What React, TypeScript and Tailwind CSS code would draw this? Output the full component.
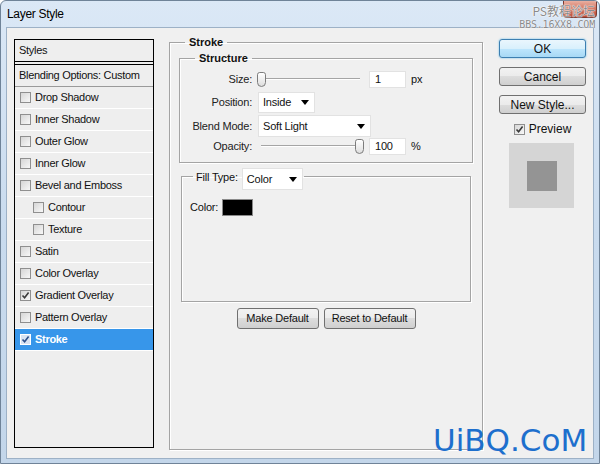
import React from "react";

type StyleItem = {
  label: string;
  on?: boolean;
  indent?: boolean;
  selected?: boolean;
};

const STYLE_ITEMS: StyleItem[] = [
  { label: "Drop Shadow" },
  { label: "Inner Shadow" },
  { label: "Outer Glow" },
  { label: "Inner Glow" },
  { label: "Bevel and Emboss" },
  { label: "Contour", indent: true },
  { label: "Texture", indent: true },
  { label: "Satin" },
  { label: "Color Overlay" },
  { label: "Gradient Overlay", on: true },
  { label: "Pattern Overlay" },
  { label: "Stroke", on: true, selected: true },
];

function CheckBox({ on, inverted }: { on?: boolean; inverted?: boolean }) {
  return (
    <span
      className={`flex h-[11px] w-[11px] shrink-0 items-center justify-center border ${
        inverted
          ? "border-white bg-[#d7e3f3]"
          : "border-[#8f8f8f] bg-linear-to-br from-[#d6d6d6] to-[#f8f8f8]"
      }`}
    >
      {on && (
        <svg width="9" height="9" viewBox="0 0 9 9">
          <path d="M1.5 4.5 L3.6 6.8 L7.6 1.6" fill="none" stroke={inverted ? "#2c4f8a" : "#3a3a3a"} strokeWidth="1.6" />
        </svg>
      )}
    </span>
  );
}

function Arrow() {
  return (
    <svg width="8" height="5" viewBox="0 0 8 5" className="shrink-0">
      <path d="M0 0 H8 L4 5 Z" fill="#000" />
    </svg>
  );
}

function Select({ value, width }: { value: string; width: string }) {
  return (
    <div className={`flex h-full items-center justify-between border border-[#e2e2e2] bg-white pl-[4px] pr-[5px] ${width}`}>
      <span className="text-[11px] tracking-[-0.2px]">{value}</span>
      <Arrow />
    </div>
  );
}

function Slider({ atEnd }: { atEnd?: boolean }) {
  return (
    <div className="relative h-[17px] w-[107px]">
      <div className="absolute left-[4px] right-[4px] top-[7px] h-[2px] border-t border-[#a5a5a5] bg-white" />
      <div
        className={`absolute top-[1px] h-[15px] w-[9px] rounded-[3px] rounded-b-[5px] border border-[#7c7c7c] bg-linear-to-b from-white to-[#dedede] ${
          atEnd ? "right-0" : "left-0"
        }`}
      />
    </div>
  );
}

function NumberBox({ value }: { value: string }) {
  return (
    <div className="flex h-[17px] w-[37px] items-center border border-[#e2e2e2] bg-white pl-[5px] text-[11px]">
      {value}
    </div>
  );
}

function Button({ children, primary, width }: { children: React.ReactNode; primary?: boolean; width: string }) {
  return (
    <div
      className={`flex items-center justify-center rounded-[3px] border ${width} ${
        primary
          ? "border-[#3c7fb1] bg-[linear-gradient(#eaf6fd,#d9f0fc_50%,#bee6fd_50%,#a7d9f5)] shadow-[0_0_2px_#5cb8e8]"
          : "border-[#707070] bg-[linear-gradient(#f2f2f2,#ebebeb_50%,#dddddd_50%,#cfcfcf)]"
      }`}
    >
      {children}
    </div>
  );
}

export default function App() {
  return (
    <div className="relative flex h-[464px] w-[600px] flex-col overflow-hidden rounded-t-[6px] border border-[#6f8398] bg-linear-to-b from-[#dbe8f6] via-[#c9dbee] to-[#c3d6ea] font-['Liberation_Sans',Arial,sans-serif] text-[#111]">
      {/* title bar */}
      <div className="flex h-[26px] shrink-0 justify-between">
        <span className="pl-[6px] pt-[6px] text-[12px] leading-[15px] tracking-[-0.3px] text-black">Layer Style</span>
        <div className="mr-[2px] h-[17px] w-[34px] rounded-b-[4px] border border-t-0 border-[#7b3a30] bg-linear-to-b from-[#eab0a2] via-[#d0705c] to-[#b8402a]" />
      </div>

      <div className="absolute right-[4px] top-[2px] flex flex-col items-end">
        <span className="font-['Noto_Sans_CJK_SC',sans-serif] text-[12px] leading-[15px] text-[#8a8a8a] [text-shadow:0_0_1px_#fff,0_0_1px_#fff,0_0_2px_#fff]">
          PS教程论坛
        </span>
        <span className="mt-[1px] font-['DejaVu_Sans_Mono',monospace] text-[10px] leading-[11px] tracking-[-0.2px] text-[#8a8a8a] [text-shadow:0_0_1px_#fff,0_0_1px_#fff]">
          BBS.16XX8.COM
        </span>
      </div>

      {/* client area */}
      <div className="mx-[5px] mb-[4px] flex flex-1 gap-[15px] border border-[#9db1c6] bg-[#f0f0f0] pl-[7px] pt-[11px]">
        {/* styles list */}
        <div className="flex h-[409px] w-[140px] shrink-0 flex-col border border-black bg-[#eeeeee] text-[11px] tracking-[-0.3px]">
          <div className="flex h-[22px] items-center border-b border-black pl-[4px]">Styles</div>
          <div className="h-[2px]" />
          <div className="flex h-[23px] items-center border-y border-t-black border-b-[#9a9a9a] pl-[4px]">
            Blending Options: Custom
          </div>
          {STYLE_ITEMS.map((item) => (
            <div
              key={item.label}
              className={`flex h-[22px] items-center gap-[4px] border-b border-white ${item.indent ? "pl-[18px]" : "pl-[5px]"} ${
                item.selected ? "bg-[#3796ea] font-bold text-white" : ""
              }`}
            >
              <CheckBox on={item.on} inverted={item.selected} />
              <span>{item.label}</span>
            </div>
          ))}
        </div>

        {/* stroke panel */}
        <fieldset className="mx-0 mb-0 -mt-[3px] h-[414px] w-[314px] shrink-0 border border-[#a4a4a4] p-0 shadow-[inset_1px_1px_0_#fff,1px_1px_0_#fff]">
          <legend className="ml-[15px] px-[4px] text-[11px] font-bold leading-[13px]">Stroke</legend>

          <fieldset className="mx-[9px] mb-0 mt-[3px] border border-[#a4a4a4] px-0 pb-[7px] pt-[6px] shadow-[inset_1px_1px_0_#fff,1px_1px_0_#fff]">
            <legend className="ml-[15px] px-[4px] text-[11px] font-bold leading-[13px]">Structure</legend>
            <div className="flex flex-col text-[11px] tracking-[-0.2px]">
              <div className="flex h-[17px] items-center">
                <span className="w-[72px] text-right text-[#222]">Size:</span>
                <div className="ml-[5px]">
                  <Slider />
                </div>
                <div className="ml-[5px]">
                  <NumberBox value="1" />
                </div>
                <span className="ml-[5px]">px</span>
              </div>
              <div className="mt-[4px] flex h-[21px] items-center">
                <span className="w-[72px] text-right text-[#222]">Position:</span>
                <div className="ml-[6px] h-full">
                  <Select value="Inside" width="w-[57px]" />
                </div>
              </div>
              <div className="mt-[2px] flex h-[22px] items-center">
                <span className="w-[72px] text-right text-[#222]">Blend Mode:</span>
                <div className="ml-[6px] h-full">
                  <Select value="Soft Light" width="w-[113px]" />
                </div>
              </div>
              <div className="mt-[1px] flex h-[17px] items-center">
                <span className="w-[72px] text-right text-[#222]">Opacity:</span>
                <div className="ml-[5px]">
                  <Slider atEnd />
                </div>
                <div className="ml-[5px]">
                  <NumberBox value="100" />
                </div>
                <span className="ml-[5px]">%</span>
              </div>
            </div>
          </fieldset>

          <fieldset className="mx-[11px] mb-0 mt-[5px] h-[134px] border border-[#a4a4a4] px-0 pb-0 pt-[15px] shadow-[inset_1px_1px_0_#fff,1px_1px_0_#fff]">
            <legend className="ml-[11px] flex h-[16px] items-start pl-[3px] pr-[1px] text-[11px] tracking-[-0.2px]">
              <span className="leading-[18px]">Fill Type:</span>
              <div className="ml-[4px] h-[22px]">
                <Select value="Color" width="w-[61px]" />
              </div>
            </legend>
            <div className="flex items-center pl-[8px] text-[11px] tracking-[-0.2px]">
              <span>Color:</span>
              <div className="ml-[4px] h-[17px] w-[31px] border border-[#8a8a8a] bg-black" />
            </div>
          </fieldset>

          <div className="mt-[6px] flex justify-center gap-[5px] text-[11px] tracking-[-0.2px]">
            <Button width="w-[82px] h-[21px]">Make Default</Button>
            <Button width="w-[92px] h-[21px]">Reset to Default</Button>
          </div>
        </fieldset>

        {/* buttons + preview */}
        <div className="ml-[1px] flex w-[87px] shrink-0 flex-col text-[12px]">
          <Button primary width="h-[19px]">
            OK
          </Button>
          <div className="mt-[9px]">
            <Button width="h-[19px]">Cancel</Button>
          </div>
          <div className="mt-[9px]">
            <Button width="h-[19px]">New Style...</Button>
          </div>
          <div className="mt-[8px] flex h-[14px] items-center justify-center gap-[4px]">
            <CheckBox on />
            <span>Preview</span>
          </div>
          <div className="ml-[10px] mt-[7px] flex h-[65px] w-[65px] items-center justify-center bg-[#d5d5d5]">
            <div className="h-[30px] w-[30px] bg-[#949494]" />
          </div>
        </div>
      </div>

      <span className="absolute left-[432px] top-[424px] font-['DejaVu_Sans',sans-serif] text-[31px] leading-none text-[#1d6fcd]">
        UiBQ.CoM
      </span>
    </div>
  );
}
